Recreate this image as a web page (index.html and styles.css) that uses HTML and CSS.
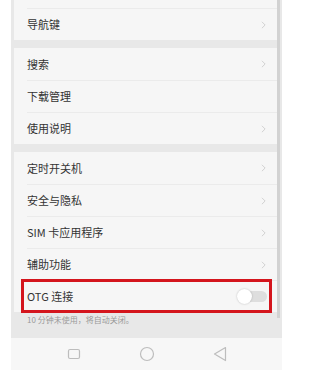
FILE: index.html
```html
<!DOCTYPE html>
<html lang="zh-CN">
<head>
<meta charset="utf-8">
<link rel="stylesheet" href="styles.css">
</head>
<body>
<div class="screen">
  <div class="main">
    <div class="content">
      <div class="card first">
        <div class="row"><span class="label"></span><svg class="chev" viewBox="0 0 6 10"><polyline points="1,1 5,5 1,9"/></svg></div>
        <div class="row"><span class="label">导航键</span><svg class="chev" viewBox="0 0 6 10"><polyline points="1,1 5,5 1,9"/></svg></div>
      </div>
      <div class="card">
        <div class="row"><span class="label">搜索</span><svg class="chev" viewBox="0 0 6 10"><polyline points="1,1 5,5 1,9"/></svg></div>
        <div class="row"><span class="label">下载管理</span></div>
        <div class="row"><span class="label">使用说明</span><svg class="chev" viewBox="0 0 6 10"><polyline points="1,1 5,5 1,9"/></svg></div>
      </div>
      <div class="card">
        <div class="row"><span class="label">定时开关机</span><svg class="chev" viewBox="0 0 6 10"><polyline points="1,1 5,5 1,9"/></svg></div>
        <div class="row"><span class="label">安全与隐私</span><svg class="chev" viewBox="0 0 6 10"><polyline points="1,1 5,5 1,9"/></svg></div>
        <div class="row"><span class="label">SIM 卡应用程序</span><svg class="chev" viewBox="0 0 6 10"><polyline points="1,1 5,5 1,9"/></svg></div>
        <div class="row"><span class="label">辅助功能</span><svg class="chev" viewBox="0 0 6 10"><polyline points="1,1 5,5 1,9"/></svg></div>
        <div class="row otg"><span class="label">OTG 连接</span><span class="toggle"><span class="knob"></span></span><span class="highlight"></span></div>
      </div>
      <div class="hint">10 分钟未使用，将自动关闭。</div>
    </div>
    <div class="scrollbar"></div>
  </div>
  <div class="navbar">
    <svg class="nav-icon" width="14" height="14" viewBox="0 0 14 14"><rect x="1.5" y="2.5" width="11" height="9" rx="1.5"/></svg>
    <svg class="nav-icon" width="16" height="16" viewBox="0 0 16 16"><circle cx="8" cy="8" r="6.5"/></svg>
    <svg class="nav-icon" width="14" height="16" viewBox="0 0 14 16"><path d="M12.5 1.5 L1.5 8 L12.5 14.5 Z" stroke-linejoin="round"/></svg>
  </div>
</div>
</body>
</html>
```

FILE: styles.css
```css
html, body {
  margin: 0;
  padding: 0;
  background: #ffffff;
}
body {
  font-family: "Noto Sans CJK SC", "Noto Sans", sans-serif;
  width: 309px;
  height: 388px;
  overflow: hidden;
}
.screen {
  width: 271px;
  margin-left: 11px;
  background: #e8e8e8;
}
.main {
  display: flex;
  height: 338px;
  overflow: hidden;
  padding-left: 3px;
  padding-right: 2px;
}
.content {
  width: 263px;
  display: flex;
  flex-direction: column;
  gap: 8px;
}
.scrollbar {
  width: 3px;
  height: 318px;
  background: #d2d2d2;
}
.card {
  background: #f6f6f6;
}
.card.first {
  margin-top: -24px;
}
.row {
  position: relative;
  height: 32px;
  margin-left: 13px;
  padding-right: 11px;
  display: flex;
  align-items: center;
  justify-content: space-between;
  box-sizing: border-box;
}
.row + .row {
  border-top: 1px solid #ebebeb;
}
.label {
  font-size: 11px;
  color: #333333;
  line-height: 1;
}
.chev {
  width: 5px;
  height: 8px;
  fill: none;
  stroke: #c8c8c8;
  stroke-width: 1;
}
.toggle {
  position: relative;
  width: 29px;
  height: 11px;
  border-radius: 6px;
  background: #dedede;
  margin-right: -1px;
}
.knob {
  position: absolute;
  left: -1px;
  top: -2px;
  width: 15px;
  height: 15px;
  border-radius: 50%;
  background: #ffffff;
  box-shadow: 0 0 2px rgba(0,0,0,0.25);
}
.highlight {
  position: absolute;
  left: -6px;
  right: 5px;
  top: -2px;
  bottom: -1px;
  border: 3px solid #d4151d;
  pointer-events: none;
}
.hint {
  margin-top: -5px;
  padding-left: 13px;
  font-size: 8px;
  color: #9a9a9a;
  line-height: 10px;
}
.navbar {
  height: 32px;
  background: #f7f7f7;
  display: flex;
  align-items: center;
  justify-content: center;
  gap: 58px;
}
.nav-icon {
  fill: none;
  stroke: #bdbdbd;
  stroke-width: 1.2;
}
```
